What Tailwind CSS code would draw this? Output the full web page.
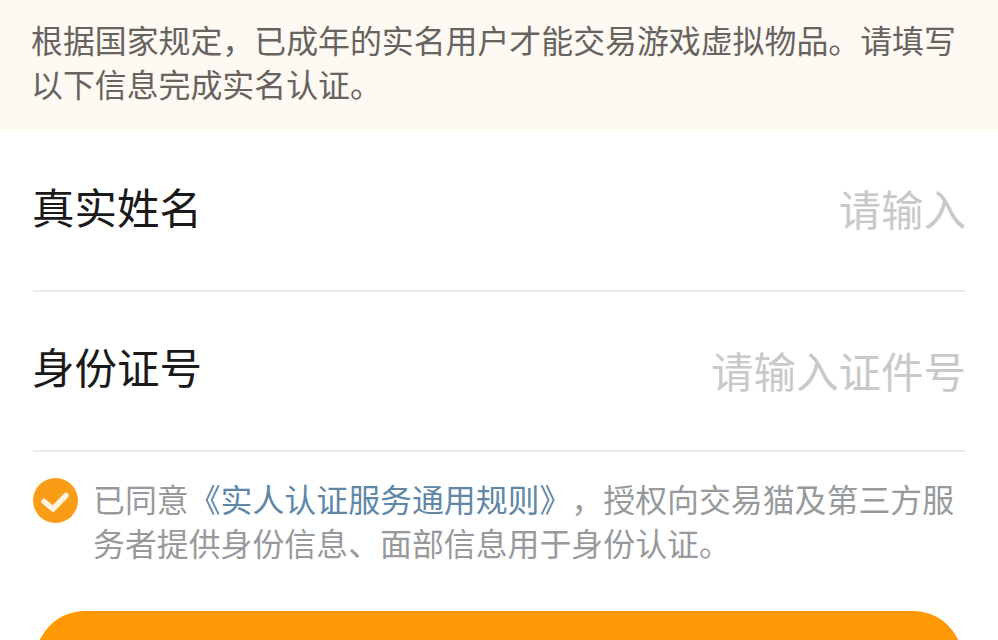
<!DOCTYPE html>
<html lang="zh-CN">
<head>
    <meta charset="UTF-8">
    <title>实名认证</title>
    <script src="https://cdn.jsdelivr.net/npm/@tailwindcss/browser@4"></script>
</head>
<body class="bg-white overflow-hidden font-['Noto_Sans_CJK_SC','Noto_Sans',sans-serif] [text-spacing-trim:space-all]">
    <div class="w-[998px] h-[640px] overflow-hidden">
        <!-- Notice banner -->
        <div class="bg-[#fef9f2] h-[131px] pt-[17px] pl-[31px] pr-[30px] text-[31.9px] leading-[44px] text-[#666360]">
            根据国家规定，已成年的实名用户才能交易游戏虚拟物品。请填写以下信息完成实名认证。
        </div>

        <!-- Form rows -->
        <div class="mx-[33px]">
            <div class="flex justify-between items-center h-[161px] border-b-2 border-[#e9e9e9]">
                <span class="text-[42.5px] text-[#1a1a1a] leading-none -mt-[9px] -ml-[1px]">真实姓名</span>
                <span class="text-[42.5px] text-[#c9c9c9] leading-none -mt-[5px] -mr-[1px]">请输入</span>
            </div>
            <div class="flex justify-between items-center h-[160px] border-b-2 border-[#e9e9e9]">
                <span class="text-[42.5px] text-[#1a1a1a] leading-none -mt-[9px] -ml-[1px]">身份证号</span>
                <span class="text-[42.5px] text-[#c9c9c9] leading-none -mt-[1px] -mr-[1px]">请输入证件号</span>
            </div>
        </div>

        <!-- Agreement -->
        <div class="flex items-start gap-[15px] ml-[33px] mr-[30px] mt-[26px]">
            <svg class="w-[45px] h-[45px] shrink-0" viewBox="0 0 45 45">
                <circle cx="22.5" cy="22.5" r="22.5" fill="#f99d16"/>
                <path d="M11 23.5 L20 31 L33 17.5" fill="none" stroke="#fdf3e0" stroke-width="5.5" stroke-linecap="round" stroke-linejoin="round"/>
            </svg>
            <p class="text-[31.9px] leading-[44px] text-[#979a9c] -mt-[2px]">已同意<span class="text-[#5f88a8]">《实人认证服务通用规则》</span>，授权向交易猫及第三方服务者提供身份信息、面部信息用于身份认证。</p>
        </div>

        <!-- Submit button, cut off by the window -->
        <div class="mx-[35px] mt-[47px] h-[100px] rounded-[50px] bg-[#ff9805]"></div>
    </div>
</body>
</html>
